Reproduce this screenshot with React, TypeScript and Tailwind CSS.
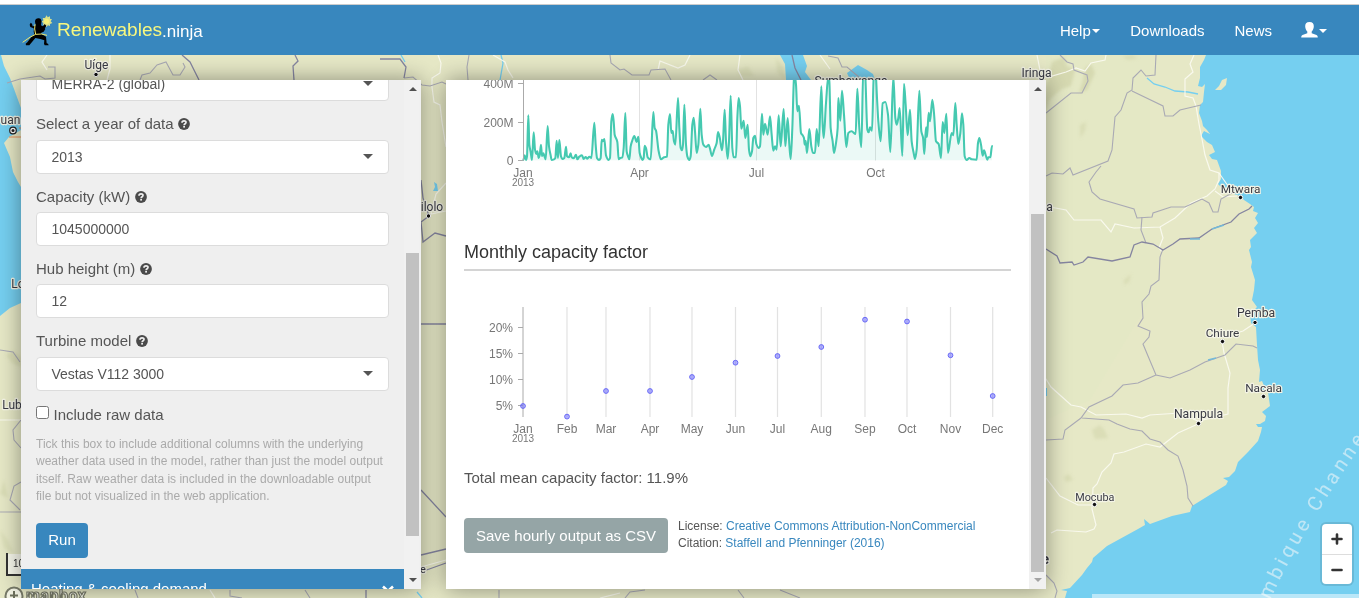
import React from "react";

const FONT = "font-['Liberation_Sans',Arial,sans-serif]";

const SERIES =
  "70,246 74,232 78,246 81,235 85,112 88,200 92,222 96,246 101,163 105,215 109,228 112,220 116,240 119,232 123,200 126,234 130,226 133,234 137,244 143,144 147,205 152,232 155,246 162,244 166,240 170,188 174,240 178,186 183,235 187,243 193,240 198,206 201,235 207,238 212,226 215,238 221,241 228,230 232,244 238,236 246,232 251,243 257,237 262,242 268,236 274,240 283,134 287,200 291,240 297,246 302,240 305,185 309,190 313,183 318,232 326,246 330,240 334,130 338,108 341,130 344,170 352,192 356,244 361,240 367,238 371,210 376,105 380,220 384,235 388,244 392,205 396,190 403,174 410,192 415,176 419,225 424,240 428,246 431,240 434,203 438,210 443,238 448,243 452,244 460,102 464,150 468,158 476,220 483,244 492,238 501,236 505,140 510,108 514,165 518,158 522,190 526,200 534,60 538,150 542,210 546,217 549,200 553,80 558,200 562,235 568,246 572,235 577,140 581,119 585,160 590,225 595,200 601,92 605,170 610,200 618,207 626,200 630,212 636,234 643,214 650,195 654,162 659,178 666,217 669,190 674,95 678,190 683,242 687,190 692,53 697,210 701,238 708,238 712,120 716,60 720,85 724,152 731,128 736,180 743,140 747,215 751,235 756,220 760,180 765,173 769,198 776,210 780,205 786,107 790,170 795,137 803,170 810,115 815,170 820,218 825,205 830,215 836,112 842,205 851,93 856,205 863,120 868,200 872,243 877,150 882,0 884,-10 888,20 892,100 897,83 903,165 908,172 912,180 914,200 917,188 921,225 928,153 934,205 939,225 945,225 950,153 956,205 964,25 968,140 971,180 978,75 985,-5 988,10 992,150 998,190 1002,225 1008,195 1013,150 1015,60 1021,128 1026,38 1032,110 1039,207 1045,165 1055,160 1067,168 1072,32 1078,150 1084,207 1090,-30 1095,-20 1102,155 1106,163 1110,148 1116,158 1121,0 1126,-30 1131,60 1135,130 1142,190 1148,76 1156,72 1164,110 1171,222 1180,-5 1186,120 1190,140 1195,120 1199,90 1207,234 1212,17 1217,80 1223,172 1230,95 1235,190 1241,225 1245,243 1250,215 1258,38 1264,160 1269,178 1273,228 1278,148 1281,177 1286,104 1290,130 1297,65 1302,105 1308,190 1316,198 1323,240 1328,132 1333,165 1339,107 1344,225 1355,165 1360,172 1366,75 1370,140 1375,198 1381,165 1386,106 1390,140 1394,235 1400,246 1408,240 1415,244 1430,245 1434,195 1438,180 1443,200 1448,233 1452,217 1458,234 1462,245 1465,238 1471,238 1476,204";

/* Monotone cubic interpolation: flat tangents at local extremes, averaged slopes elsewhere. */
function smooth(points: string) {
  const p = points.split(" ").map((s) => s.split(",").map(Number));
  const slope = (i: number) => (p[i + 1][1] - p[i][1]) / (p[i + 1][0] - p[i][0]);
  const tangent = p.map((_, i) => {
    if (i === 0 || i === p.length - 1) return 0;
    const a = slope(i - 1);
    const b = slope(i);
    return a * b <= 0 ? 0 : (2 * a * b) / (a + b);
  });
  let d = `M${p[0][0]},${p[0][1]}`;
  for (let i = 1; i < p.length; i++) {
    const dx = (p[i][0] - p[i - 1][0]) / 3;
    d += `C${p[i - 1][0] + dx},${p[i - 1][1] + dx * tangent[i - 1]} ${p[i][0] - dx},${p[i][1] - dx * tangent[i]} ${p[i][0]},${p[i][1]}`;
  }
  return d;
}

const OUTPUT_PATH = smooth(SERIES);

const MONTHS: [string, number, number][] = [
  ["Jan", 523, 406],
  ["Feb", 567, 416.6],
  ["Mar", 606, 391],
  ["Apr", 650, 391],
  ["May", 692, 377],
  ["Jun", 735.5, 362.7],
  ["Jul", 777.5, 356],
  ["Aug", 821.3, 347],
  ["Sep", 865, 319.7],
  ["Oct", 907, 321.5],
  ["Nov", 950.5, 355.3],
  ["Dec", 992.7, 396],
];

const PLACES: [string, number, number, number, number, number][] = [
  ["Uíge", 96.5, 69, 96, 74.5, 12],
  ["uan", 10.5, 124, -9, -9, 12],
  ["Lo", 18, 288, -9, -9, 12],
  ["Lub", 12, 408.5, -9, -9, 12],
  ["Iringa", 1036.5, 77, -9, -9, 12],
  ["Sumbawanga", 851, 85, -9, -9, 12],
  ["ilolo", 432, 211, 428.5, 216, 12],
  ["a", 1049.5, 211, -9, -9, 12],
  ["e", 423, 573, -9, -9, 11],
  ["Mtwara", 1240.5, 192.5, 1240.5, 197.5, 11.8],
  ["Pemba", 1256, 317, 1255, 322.5, 12.2],
  ["Chiure", 1222.5, 337, 1222.5, 341.5, 11.8],
  ["Nacala", 1263.5, 392, 1263.5, 396.5, 11.8],
  ["Nampula", 1198.5, 418, 1198.5, 423.5, 12.2],
  ["Mocuba", 1094.8, 500.5, 1094.5, 504.5, 10.8],
];

function MapCanvas() {
  return (
    <svg className="absolute inset-0" width="1359" height="598" viewBox="0 0 1359 598">
      <defs>
        <filter id="soft" x="-20%" y="-20%" width="140%" height="140%">
          <feGaussianBlur stdDeviation="1.5" />
        </filter>
        <path id="channel" d="M1270 600 C1289 560 1315 512 1369 434" />
      </defs>
      <rect width="1359" height="598" fill="#e6e8c6" />
      <path d="M1046 55H1150V300L1090 400L1046 420Z" fill="#e4e8c5" />
      <g fill="#d6d9b1" filter="url(#soft)">
        <path d="M1052 62l12-5 3 9 8 4-4 16-9 3-12 10-6 16 2-28zM1085 68l6-4 4 9-8 17-8 3 4-12z" />
        <path d="M1080 125l6-3-1 9-5 7zM1122 56l10-1 6 3-10 2zM1092 430l8-5 5 6 3 7-13 1z" opacity=".7" />
        <path d="M1124 280l7-6-2 8-5 3zM1064 477l5-3 4 6-7 2zM6 355l7-4 8 6v10l-9-4zM4 480l4 18-8-4z" opacity=".7" />
        <path d="M0 530l8 10 6 14-10-6zM738 70l10-4 6 10h-14zM776 58l8 10 1 12-8-8z" opacity=".6" />
      </g>
      <g fill="#75cff0">
        <path d="M1206 55L1204 60L1200 67L1200 78L1198 86L1202 87L1205 84L1204 92L1203 102L1200 105L1199 113L1202 121L1203 126L1207 130L1210 134L1204 131L1201 136L1207 142L1212 145L1215 152L1209 155L1212 159L1217 160L1221 171L1221 179L1218 184L1222 188L1228 192L1240 196L1244 200L1250 204L1254 207L1253 211L1258 213L1255 218L1258 223L1254 228L1257 233L1250 240L1251 247L1249 250L1252 262L1251 267L1255 280L1254 290L1252 300L1257 307L1250 314L1251 323L1256 327L1257 345L1258 360L1260 370L1259 382L1262 381L1264 386L1261 390L1268 392L1270 406L1262 412L1266 416L1265 421L1260 424L1256 424L1258 427L1262 427L1261 432L1258 441L1248 452L1238 462L1235 471L1229 477L1223 478L1228 481L1226 485L1213 493L1192 506L1190 512L1172 516L1150 524L1144 519L1145 525L1138 529L1107 546L1093 558L1092 562L1087 568L1082 575L1070 588L1061 590L1067 591L1065 598H1359V55Z" />
        <path d="M0 55L1 55L4 66L10 78L21 108V130L9 137L4 143L10 157L13 172L18 182L21 187V303L10 308L0 316Z" />
        <path d="M780 55H803L807 66L805 72L811 80H786L785 64Z" />
        <path d="M847 73L858 65L867 70L873 74L875 80H850Z" />
        <path d="M1238 192l5 2-3 2zM1044 388h3v8h-3zM434 182l3 2 1 7h-5l2-4z" />
      </g>
      <path d="M1227 78L1222 80L1219 86L1215 90L1221 90L1226 85Z" fill="#e6e8c6" />
      <g fill="none" stroke="#75cff0" strokeWidth="1.3">
        <path d="M1147 78L1154 84L1165 87L1175 91L1188 92L1198 94M501 55l2 8-3 17M401 55l4 7M417 592l5 6" />
      </g>
      <g fill="none" stroke="#fbfbf2" strokeWidth="1.2" opacity=".9">
        <path d="M1037 55L1040 70L1052 76L1066 72L1076 68L1085 71L1091 63L1105 60L1106 55" />
        <path d="M1194 55L1190 64L1193 72L1185 79L1185 96L1193 98L1196 106L1199 124L1202 139L1205 155L1210 170L1219 173L1219 180L1215 189L1207 196L1191 203L1175 218L1160 227L1134 228L1115 224L1111 232L1101 220L1074 220L1066 210L1050 207" />
        <path d="M1219 173l14 20M1215 191l8 6 14-1M1160 227l3 11-4 10 3 4M1255 323l-12 8-20 6M1222 341l2 12 6 20-2 15v26l-30 7-18-8-30 2-8 3-16-4-30 1-15-8-10-2-20-18-5-8-14-1M1198 424l-20 9-18 14-14-3-22 8-10 2-3 9-9 9-5 12-4 4-1 21 4 16-2 4-8 3-29-2-6 3M1046 478l14 18 18 9 17 0" />
        <path d="M438 55L441 63L440 73L432 78L432 87L434 102L440 105L442 122L446 147M493 55L505 62L508 70L513 78M21 420L0 420M658 70L660 61L678 68L685 65L690 55M740 55L738 70L743 80M820 55l10 14" />
        <path d="M47 55L42 62L47 70M110 55v14l-3 11M600 598l20-5M210 590l5 8M446 183l-10 11-5 20 15-3M421 567l25-7" />
      </g>
      <g fill="none" stroke="#a9a9b4" strokeWidth="1.1">
        <path d="M1060 55L1067 62L1073 64L1074 70L1087 75L1088 81L1082 93L1071 93L1046 113M1156 55L1155 75L1146 76L1141 70L1133 78L1132 90L1127 93L1121 110L1115 117L1112 150L1108 161L1073 175L1070 168L1063 174L1052 173L1046 176" />
        <path d="M1132 91L1163 106L1165 116L1173 116L1180 110L1201 105M1101 166L1096 172L1089 182L1092 192L1100 199L1134 209L1137 218L1152 217L1153 213L1171 207L1185 207L1202 199L1209 203L1213 212L1218 212L1221 199L1232 193" />
        <path d="M1142 217L1141 230L1146 243M1163 249L1160 257L1159 280L1151 286L1149 294L1142 302L1143 318L1138 326L1150 331L1149 337L1143 344L1148 356L1156 375L1170 378L1190 370L1205 362L1225 355L1236 344L1253 346L1257 348M1156 375L1138 383L1123 385L1112 396L1089 407L1081 418L1065 430L1063 439L1046 440M1082 418L1109 420L1117 424L1130 429L1142 431L1150 439L1160 442L1168 450L1178 456L1183 470L1187 486L1188 498L1193 506" />
        <path d="M7 83L20 79L40 76L45 79L55 78L55 67L48 67M140 80L142 75L150 73L157 65L166 62L173 75L180 75L185 67L183 63M469 55L467 67L468 80M610 55L611 63L620 70L624 69L632 75L649 75L651 70L665 69L671 80M703 80L710 75L717 80M828 56L838 58L842 67L847 67L860 78" />
        <path d="M404 78L413 77L422 85L430 86L442 82L446 84M0 350L13 352L20 362M21 420L13 430L14 440L21 448M21 482L14 486L10 500L20 510M0 512l21 0M499 598v-8M625 598l5-6 15-2M738 590l6 8M780 590l20 8M1046 575l8 8 3 8-2 7M135 590l3 8M230 590v6l12 2M305 590l5 8" />
      </g>
      <g fill="none" stroke="#8585a0" strokeWidth="1.3">
        <path d="M182 55L190 62L195 72L199 80M380 59H400L406 67L404 78M295 55l3 6-5 5 1 14M792 55l3 13 6 12M421 180l2 18 6 18-8 6 2 20 12-9 11 3M421 324h25M421 490l25 27M421 555l25-6M421 572l25-9M366 590v8" />
        <path d="M1046 249L1057 256L1060 263L1072 262L1074 265L1083 262L1088 257L1112 261L1130 257L1134 245L1142 242L1153 244L1163 250L1173 244L1180 239L1199 238L1212 229L1231 222L1239 214L1249 209L1252 206" />
      </g>
      <path d="M1190 239l10 0M1212 229l12-4M1208 360l8-2" stroke="#75b9d8" strokeWidth="1.5" />
      <text
        fill="#dff1f8"
        opacity=".7"
        className="font-['Roboto','Open_Sans',sans-serif]"
        fontSize="20"
        letterSpacing="4"
      >
        <textPath href="#channel">mbique Channel</textPath>
      </text>
      <g
        className="font-['Roboto','Noto_Sans',sans-serif]"
        textAnchor="middle"
        fill="#3a3b44"
        stroke="#f4f4e6"
        strokeWidth="2.4"
        strokeLinejoin="round"
        paintOrder="stroke"
      >
        {PLACES.map(([name, x, y, , , size]) => (
          <text key={name} x={x} y={y} fontSize={size}>
            {name}
          </text>
        ))}
        <text x="1045" y="564" fontSize="15" fontWeight="700">e</text>
      </g>
      {PLACES.map(([name, , , cx, cy]) => (
        <circle key={name} cx={cx} cy={cy} r="2.2" fill="#111" stroke="#fff" strokeWidth="1" />
      ))}
      <circle cx="13" cy="130.5" r="3.3" fill="#fff" stroke="#222" strokeWidth="1.2" />
      <circle cx="13" cy="130.5" r="1.5" fill="#222" />
      <path d="M9 137h14M19 128h3" stroke="#e8905a" />
      <g>
        <path d="M7 554H40V575H7Z" fill="#fff" opacity=".65" />
        <path d="M7 553V575H40" fill="none" stroke="#333" strokeWidth="2" />
        <text x="13" y="567" fontSize="10" fill="#333" className="font-['Liberation_Sans',sans-serif]">
          100km
        </text>
      </g>
      <g>
        <circle cx="14" cy="596" r="8.5" fill="#fff" fillOpacity=".55" stroke="#777a68" strokeWidth="2" />
        <path d="M14 591v8M10 595.5h8" stroke="#6c705c" strokeWidth="2" />
        <text
          x="26"
          y="601"
          fontSize="16"
          fontWeight="700"
          textLength="60"
          fill="#fff"
          fillOpacity=".7"
          stroke="#777a68"
          strokeWidth="1.2"
          className="font-['Roboto',sans-serif]"
        >
          mapbox
        </text>
      </g>
      <rect x="1092" y="594" width="267" height="4" fill="#fff" opacity=".5" />
    </svg>
  );
}

function NinjaLogo() {
  return (
    <svg width="31" height="31" viewBox="65 40 93 93" className="shrink-0">
      <path
        d="M139 41l3 6 7-3 0 7 6 2-4 6 5 5-7 3 0 6-6-2-5 5-4-6-6 1 1-7-5-4 5-4-2-7 7 0z"
        fill="#d9e08a"
      />
      <circle cx="139" cy="59" r="8" fill="#f5f078" />
      <path d="M104 60c0-9 7-11 12-10 7 1 9 8 7 14l-1 7 8 5 5 6-5 8-9 4-1 8h-17l-3-12 1-12 5-8z" fill="#000" />
      <path
        d="M91 63l-3 6 2 7 10 4 4 16-9 8-14 18-5 4 1 5h10l18-22 15 3 12 4-1 10 2 5h12l-2-5-4-1-2-20-15-9 2-9 9-6 5-9-5-5-5 7-9 1-14-2-8 1-2-8z"
        fill="#000"
      />
      <path d="M67 122L90 106L106 98L124 97L140 101M104 68L103 82L106 98" fill="none" stroke="#f2e86a" strokeWidth="3" />
    </svg>
  );
}

function Caret() {
  return <span className="block h-0 w-0 border-x-4 border-t-4 border-x-transparent border-t-current" />;
}

function Header() {
  return (
    <header className="relative z-10 border-t-4 border-white">
      <nav className="flex h-[51px] items-center border-t border-[#ccc] bg-[#3887be] pr-[32px] pl-[22px] text-[15px] text-white">
        <NinjaLogo />
        <div className="ml-[4px] flex items-baseline">
          <span className="text-[19.1px] leading-[20px] text-[#f7f77f]">Renewables</span>
          <span className="relative top-px text-[17px] leading-[20px]">.ninja</span>
        </div>
        <div className="ml-auto flex items-center pt-[2px]">
          <span className="flex items-center gap-px">
            Help
            <Caret />
          </span>
          <span className="ml-[30.5px]">Downloads</span>
          <span className="ml-[30px]">News</span>
          <span className="ml-[29px] flex items-center gap-[1px]">
            <svg width="17" height="16" viewBox="0 0 17 16" fill="currentColor" className="mb-[3px]">
              <path d="M8.5 0C5.300 0 4 2 4.200 4.800C4.400 6.800 5.300 8.700 6.300 9.500V11.200L1.500 13C.5 13.500 .3 14.200 .2 15.500H16.800C16.700 14.200 16.500 13.500 15.500 13L10.700 11.200V9.500C11.700 8.700 12.600 6.800 12.800 4.800C13 2 11.700 0 8.500 0Z" />
            </svg>
            <Caret />
          </span>
        </div>
      </nav>
    </header>
  );
}

function HelpIcon() {
  return (
    <svg width="12" height="12" viewBox="0 0 12 12" className="ml-[4.5px]">
      <circle cx="6" cy="6" r="5.9" fill="#4a4a4a" />
      <path d="M4 4.700C4 2.300 8.200 2.300 8 4.500C7.900 5.900 6.200 5.700 6.100 7.300" fill="none" stroke="#efefef" strokeWidth="1.7" />
      <rect x="5.2" y="8" width="1.8" height="1.6" fill="#efefef" />
    </svg>
  );
}

function Field({ label, value, select, tall }: { label?: string; value: string; select?: boolean; tall?: boolean }) {
  return (
    <>
      {label && (
        <label className={`flex items-center ${tall ? "h-[39px] pt-[7px]" : "h-[38px] pt-[8px]"}`}>
          {label}
          <HelpIcon />
        </label>
      )}
      <div className="flex h-[34px] shrink-0 items-center rounded-[4px] border border-[#dcdcdc] bg-white pr-[15px] pl-[14.5px] text-[14px]">
        <span className="grow">{value}</span>
        {select && <span className="mb-px h-0 w-0 border-x-[5px] border-t-[5px] border-x-transparent border-t-[#555]" />}
      </div>
    </>
  );
}

function Scrollbar({ top, height, faint }: { top: string; height: string; faint?: boolean }) {
  return (
    <div className="flex w-[17px] shrink-0 flex-col items-center bg-[#f1f1f1]">
      <div className="flex h-[17px] items-center">
        <span className="h-0 w-0 border-x-4 border-b-4 border-x-transparent border-b-[#505050]" />
      </div>
      <div className={top} />
      <div className={`w-[13px] shrink-0 bg-[#c1c1c1] ${height}`} />
      <div className="mt-auto flex h-[17px] items-center pb-px">
        <span className={`h-0 w-0 border-x-4 border-t-4 border-x-transparent ${faint ? "border-t-[#a3a3a3]" : "border-t-[#505050]"}`} />
      </div>
    </div>
  );
}

function ControlPanel() {
  return (
    <section className="flex w-[400px] overflow-hidden bg-[#efefef] text-[15px] text-[#555] shadow-[0_0_22px_rgba(0,0,0,0.4)]">
      <div className="flex w-[383px] flex-col">
        <div className="-mt-[13px] flex flex-col px-[15px]">
          <Field value="MERRA-2 (global)" select />
          <Field label="Select a year of data" value="2013" select tall />
          <Field label="Capacity (kW)" value="1045000000" />
          <Field label="Hub height (m)" value="12" />
          <Field label="Turbine model" value="Vestas V112 3000" select tall />
          <label className="mt-[14px] flex h-[21px] items-center">
            <span className="mb-[6px] h-[13px] w-[13px] rounded-[2.5px] border border-[#767676] bg-white" />
            <span className="ml-[4.5px]">Include raw data</span>
          </label>
          <p className="mt-[10px] text-[12px] leading-[17.4px] whitespace-nowrap text-[#aaa]">
            Tick this box to include additional columns with the underlying
            <br />
            weather data used in the model, rather than just the model output
            <br />
            itself. Raw weather data is included in the downloadable output
            <br />
            file but not visualized in the web application.
          </p>
          <button className="mt-[17px] h-[35px] w-[52px] rounded-[4px] bg-[#3887be] pt-px text-[15px] text-white">Run</button>
        </div>
        <div className="mt-[11px] flex h-[40px] shrink-0 items-center justify-between bg-[#3887be] px-[10px] pt-px text-[15px] text-white">
          Heating &amp; cooling demand
          <svg width="12" height="9" viewBox="0 0 12 9" fill="none" stroke="#fff" strokeWidth="2.6">
            <path d="M1 1.500L6 6L11 1.500" />
          </svg>
        </div>
      </div>
      <Scrollbar top="h-[156px]" height="h-[283px]" />
    </section>
  );
}

function OutputChart() {
  return (
    <svg width="583" height="120" viewBox="446 80 583 120" className="block shrink-0" fontSize="12" fill="#777">
      <path d="M639.5 80V160.500M756.5 80V160.500M875.5 80V160.500" stroke="#e2e2e2" />
      <g transform="translate(500 78) scale(.33333)">
        <path d={`${OUTPUT_PATH}L1476,247L70,247Z`} fill="#45c9b0" fillOpacity=".11" />
        <path d={OUTPUT_PATH} fill="none" stroke="#45c9b0" strokeWidth="6.2" strokeLinejoin="round" strokeLinecap="round" />
      </g>
      <path d="M523.5 80V160.500M518 83.500h5M518 122.500h5M518 160.500h5" stroke="#aaa" />
      <g textAnchor="end">
        <text x="513.5" y="88">400M</text>
        <text x="513.5" y="126.5">200M</text>
        <text x="513.5" y="165">0</text>
      </g>
      <g textAnchor="middle">
        <text x="523" y="177">Jan</text>
        <text x="523" y="186" fontSize="10">2013</text>
        <text x="639.5" y="177">Apr</text>
        <text x="756.5" y="177">Jul</text>
        <text x="875.5" y="177">Oct</text>
      </g>
    </svg>
  );
}

function MonthlyChart() {
  return (
    <svg width="547" height="150" viewBox="464 300 547 150" className="mt-[29px] block shrink-0" fontSize="12" fill="#777">
      {MONTHS.map(([m, x]) => (
        <path key={m} d={`M${x} 307V417`} stroke={m === "Jan" ? "#aaa" : "#e2e2e2"} strokeWidth={m === "Jan" ? 1 : 1.2} />
      ))}
      <path d="M518 327.500h5M518 353.500h5M518 379.500h5M518 405.500h5" stroke="#aaa" />
      <g textAnchor="end">
        <text x="513" y="332">20%</text>
        <text x="513" y="358">15%</text>
        <text x="513" y="384">10%</text>
        <text x="513" y="410">5%</text>
      </g>
      <g textAnchor="middle">
        {MONTHS.map(([m, x]) => (
          <text key={m} x={x} y="433">{m}</text>
        ))}
        <text x="523" y="442" fontSize="10">2013</text>
      </g>
      {MONTHS.map(([m, x, y]) => (
        <circle key={m} cx={x} cy={y} r="2.4" fill="#6666ff" fillOpacity=".5" stroke="#6060f5" strokeWidth=".9" />
      ))}
    </svg>
  );
}

function ResultsPanel() {
  return (
    <section className="flex w-[600px] overflow-hidden bg-white text-[15px] text-[#555] shadow-[0_0_22px_rgba(0,0,0,0.4)]">
      <div className="flex w-[583px] flex-col">
        <OutputChart />
        <div className="flex flex-col px-[18px]">
          <h2 className="mt-[39px] h-[32px] border-b-2 border-[#d4d4d4] text-[18px] leading-[26px] text-[#333]">
            Monthly capacity factor
          </h2>
          <MonthlyChart />
          <p className="mt-[17px] leading-[21px]">Total mean capacity factor: 11.9%</p>
          <div className="mt-[30px] flex">
            <button className="h-[35px] w-[204px] shrink-0 rounded-[4px] bg-[#95a5a6] pt-px text-[15px] whitespace-nowrap text-white">
              Save hourly output as CSV
            </button>
            <p className="ml-[10px] text-[12px] leading-[17px] whitespace-nowrap">
              License: <a className="text-[#3887be]">Creative Commons Attribution-NonCommercial</a>
              <br />
              Citation: <a className="text-[#3887be]">Staffell and Pfenninger (2016)</a>
            </p>
          </div>
        </div>
      </div>
      <Scrollbar top="h-[117px]" height="h-[358px]" faint />
    </section>
  );
}

function ZoomControl() {
  return (
    <div className="absolute top-[524px] left-[1322px] flex h-[60px] w-[30px] flex-col rounded-[4px] bg-white shadow-[0_0_0_2px_rgba(0,0,0,0.1)]">
      <button className="flex h-[31px] items-center justify-center border-b border-[#ddd]">
        <svg width="12" height="12" viewBox="0 0 12 12" stroke="#333" strokeWidth="2.6" strokeLinecap="round">
          <path d="M6 1.500v9M1.500 6h9" />
        </svg>
      </button>
      <button className="flex h-[29px] items-center justify-center">
        <svg width="12" height="12" viewBox="0 0 12 12" stroke="#333" strokeWidth="2.6" strokeLinecap="round">
          <path d="M1.500 6h9" />
        </svg>
      </button>
    </div>
  );
}

export default function App() {
  return (
    <div className={`relative h-[598px] w-[1359px] overflow-hidden ${FONT}`}>
      <MapCanvas />
      <Header />
      <main className="relative mt-[25px] ml-[21px] flex h-[509px] gap-[25px]">
        <ControlPanel />
        <ResultsPanel />
      </main>
      <ZoomControl />
    </div>
  );
}
